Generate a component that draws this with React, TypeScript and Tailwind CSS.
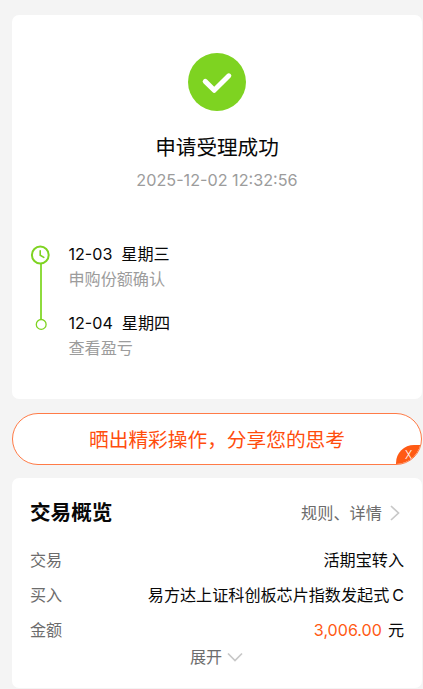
const steps = [
  { date: "12-03", day: "星期三", note: "申购份额确认" },
  { date: "12-04", day: "星期四", note: "查看盈亏" },
];

const Result = () => (
  <section className="h-96 rounded-[7px] bg-white pt-[38px]">
    <div className="flex flex-col items-center">
      <svg className="size-[58px]" viewBox="0 0 58 58" fill="none">
        <circle cx="29" cy="29" r="29" fill="#7ed321" />
        <path
          d="M17.2 28.4 26.2 37.3 40.8 22.8"
          stroke="#fff"
          strokeWidth="5"
          strokeLinecap="round"
          strokeLinejoin="round"
        />
      </svg>
      <h1 className="mt-[23px] text-[20.6px] leading-7">申请受理成功</h1>
      <p className="mt-1.5 text-[16.2px] leading-6 text-[#9c9c9c]">
        2025-12-02 12:32:56
      </p>
    </div>

    <div className="mt-[49px] flex pl-[18px]">
      <svg className="h-[121px] w-[38.5px]" viewBox="0 0 38.5 121" fill="none">
        <path d="M11 22.5V79" stroke="#8edb3e" strokeWidth="2" />
        <circle cx="10.3" cy="14" r="8.4" stroke="#7ed321" strokeWidth="2" />
        <path
          d="M10.2 9.8V14.2L13.8 16.4"
          stroke="#7ed321"
          strokeWidth="1.6"
          strokeLinecap="round"
        />
        <circle cx="11.2" cy="83.4" r="4.9" stroke="#7ed321" strokeWidth="1.3" />
      </svg>
      <ul className="flex flex-col gap-[19px]">
        {steps.map(({ date, day, note }) => (
          <li key={date} className="text-[16.1px]">
            <p className="flex gap-[9px] leading-[26px]">
              <span>{date}</span>
              <span>{day}</span>
            </p>
            <p className="leading-6 text-[#9c9c9c]">{note}</p>
          </li>
        ))}
      </ul>
    </div>
  </section>
);

const ShareBanner = () => (
  <div className="relative mt-3.5 flex h-[52px] items-center justify-center overflow-hidden rounded-full border border-[#ff7b47] bg-white text-[19.7px] text-[#ff4d0d]">
    <span className="pt-[3px] whitespace-nowrap">晒出精彩操作，分享您的思考</span>
    {/* close tab, clipped by the pill's corner */}
    <button className="absolute -right-px -bottom-px flex h-5 w-[26px] items-center rounded-tl-[18px] bg-[#ff5a14] pl-[9px] text-[11px] font-light text-white">
      X
    </button>
  </div>
);

const Overview = () => (
  <section className="mt-[13px] h-[210px] rounded-[7px] bg-white px-[18px] pt-5">
    <div className="flex h-[30px] items-center justify-between">
      <h2 className="text-[20.6px] font-bold">交易概览</h2>
      <div className="flex items-center text-[16.2px] text-[#6c6c6c]">
        规则、详情
        <svg className="mr-1 ml-2 h-4 w-2.5" viewBox="0 0 10 16" fill="none">
          <path d="M1 1 8.5 8 1 15" stroke="#c8c8c8" strokeWidth="1.7" />
        </svg>
      </div>
    </div>

    <dl className="mt-[15px] text-[16.1px] leading-[35px] whitespace-nowrap">
      <div className="flex justify-between">
        <dt className="text-[#6c6c6c]">交易</dt>
        <dd>活期宝转入</dd>
      </div>
      <div className="flex justify-between">
        <dt className="text-[#6c6c6c]">买入</dt>
        <dd className="flex gap-[3px]">
          <span>易方达上证科创板芯片指数发起式</span>
          <span>C</span>
        </dd>
      </div>
      <div className="flex justify-between">
        <dt className="text-[#6c6c6c]">金额</dt>
        <dd className="flex gap-1.5">
          <span className="text-[#ff5a14]">3,006.00</span>
          <span>元</span>
        </dd>
      </div>
    </dl>

    <div className="-mt-px flex h-5 items-center justify-center pr-px text-[16.1px] text-[#6c6c6c]">
      展开
      <svg className="ml-[5px] h-2.5 w-4" viewBox="0 0 16 10" fill="none">
        <path d="M1 1.5 8 8.5 15 1.5" stroke="#c8c8c8" strokeWidth="1.7" />
      </svg>
    </div>
  </section>
);

export default function App() {
  return (
    <main className="h-[689px] overflow-hidden bg-[#f4f4f4] pt-[15px] pr-px pl-3 font-[Inter,'Noto_Sans_CJK_SC',sans-serif] text-[#080808]">
      <Result />
      <ShareBanner />
      <Overview />
    </main>
  );
}
